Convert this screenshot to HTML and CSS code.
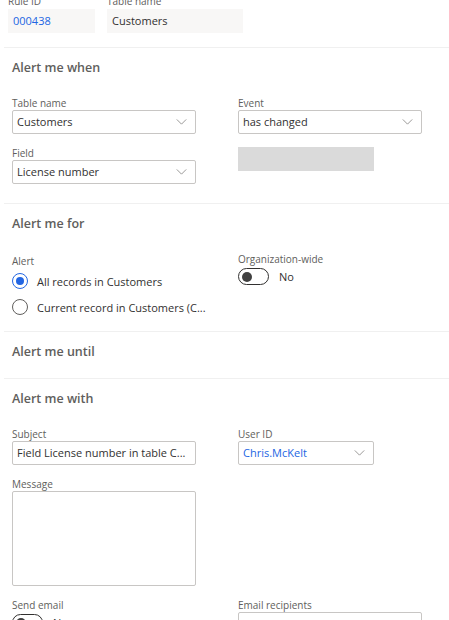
FILE: index.html
```html
<!DOCTYPE html>
<html>
<head>
<meta charset="utf-8">
<link rel="stylesheet" href="styles.css">
</head>
<body>
<div class="page">
  <div class="top">
    <div class="field">
      <div class="label">Rule ID</div>
      <div class="ro ro-id link">000438</div>
    </div>
    <div class="field">
      <div class="label">Table name</div>
      <div class="ro ro-table">Customers</div>
    </div>
  </div>

  <section class="section s-when">
    <h2 class="heading">Alert me when</h2>
    <div class="grid">
      <div class="field">
        <div class="label">Table name</div>
        <div class="input select"><span>Customers</span><svg class="chev" viewBox="0 0 12 7"><path d="M0.5 0.5 L6 6 L11.5 0.5"/></svg></div>
      </div>
      <div class="field">
        <div class="label">Event</div>
        <div class="input select"><span>has changed</span><svg class="chev" viewBox="0 0 12 7"><path d="M0.5 0.5 L6 6 L11.5 0.5"/></svg></div>
      </div>
      <div class="field">
        <div class="label">Field</div>
        <div class="input select"><span>License number</span><svg class="chev" viewBox="0 0 12 7"><path d="M0.5 0.5 L6 6 L11.5 0.5"/></svg></div>
      </div>
      <div class="field">
        <div class="disabled-box"></div>
      </div>
    </div>
  </section>

  <section class="section s-for">
    <h2 class="heading">Alert me for</h2>
    <div class="grid">
      <div class="field">
        <div class="label">Alert</div>
        <div class="radio-row"><span class="radio on"></span><span>All records in Customers</span></div>
        <div class="radio-row"><span class="radio"></span><span>Current record in Customers (C...</span></div>
      </div>
      <div class="field org">
        <div class="label">Organization-wide</div>
        <div class="toggle-row"><span class="toggle"><span class="knob"></span></span><span>No</span></div>
      </div>
    </div>
  </section>

  <section class="section s-until">
    <h2 class="heading">Alert me until</h2>
  </section>

  <section class="section s-with">
    <h2 class="heading">Alert me with</h2>
    <div class="grid">
      <div class="field">
        <div class="label">Subject</div>
        <div class="input"><span>Field License number in table C...</span></div>
      </div>
      <div class="field">
        <div class="label">User ID</div>
        <div class="input select short"><span class="link">Chris.McKelt</span><svg class="chev" viewBox="0 0 12 7"><path d="M0.5 0.5 L6 6 L11.5 0.5"/></svg></div>
      </div>
      <div class="field">
        <div class="label">Message</div>
        <div class="textarea"></div>
      </div>
      <div class="field"></div>
      <div class="field">
        <div class="label">Send email</div>
        <div class="toggle-row"><span class="toggle"><span class="knob"></span></span><span>No</span></div>
      </div>
      <div class="field">
        <div class="label">Email recipients</div>
        <div class="input"></div>
      </div>
    </div>
  </section>
</div>
</body>
</html>
```

FILE: styles.css
```css
* { box-sizing: border-box; }
html, body {
  margin: 0;
  padding: 0;
  background: #ffffff;
  overflow: hidden;
}
body {
  font-family: "Segoe UI", "Open Sans", "Noto Sans", sans-serif;
  color: #323130;
  width: 449px;
  height: 620px;
}
.page {
  margin-top: -6px;
}
.top {
  display: flex;
  gap: 12px;
  padding: 0 0 14px 8px;
}
.top .label { margin-bottom: 1px; }
.label {
  font-size: 10px;
  line-height: 14px;
  height: 14px;
  color: #605e5c;
  white-space: nowrap;
}
.ro {
  height: 24px;
  background: #f8f7f6;
  font-size: 11px;
  line-height: 24px;
  padding-left: 5px;
}
.ro-id { width: 87px; }
.ro-table { width: 136px; }
.link { color: #2266e3; }

.section {
  border-top: 1px solid #f0f0f0;
  margin-left: 4px;
  padding: 10px 0 19px 8px;
}
.heading {
  margin: 0;
  font-size: 12.5px;
  line-height: 20px;
  font-weight: 600;
  color: #605e5c;
}
.grid {
  display: grid;
  grid-template-columns: 184px 184px;
  column-gap: 42px;
  row-gap: 12px;
  margin-top: 18px;
}
.input {
  height: 24px;
  border: 1px solid #c8c6c4;
  border-radius: 2px;
  font-size: 11px;
  line-height: 22px;
  padding: 0 8px 0 4px;
  display: flex;
  align-items: center;
  justify-content: space-between;
  white-space: nowrap;
  overflow: hidden;
  background: #fff;
}
.input.short { width: 136px; }
.chev {
  width: 11px;
  height: 6px;
  flex: none;
}
.chev path {
  fill: none;
  stroke: #8a8886;
  stroke-width: 1;
}
.disabled-box {
  width: 136px;
  height: 24px;
  background: #dadada;
  margin-top: 1px;
}

.s-for { padding-bottom: 11px; }
.s-for .grid { margin-top: 20px; }
.radio-row {
  display: flex;
  align-items: center;
  gap: 9px;
  height: 26px;
  font-size: 11px;
  white-space: nowrap;
}
.radio-row:first-of-type { margin-top: 3px; }
.radio {
  width: 16px;
  height: 16px;
  border-radius: 50%;
  border: 1px solid #605e5c;
  flex: none;
  display: flex;
  align-items: center;
  justify-content: center;
}
.radio.on { border-color: #2266e3; }
.radio.on::after {
  content: "";
  width: 8px;
  height: 8px;
  border-radius: 50%;
  background: #2266e3;
}
.org { margin-top: -2px; }
.toggle-row {
  display: flex;
  align-items: center;
  gap: 10px;
  font-size: 11px;
  margin-top: 2px;
}
.toggle {
  width: 31px;
  height: 17px;
  border: 1px solid #323130;
  border-radius: 9px;
  display: flex;
  align-items: center;
  padding-left: 3px;
}
.knob {
  width: 10px;
  height: 10px;
  border-radius: 50%;
  background: #404040;
}

.s-until { padding-bottom: 16px; }
.textarea {
  height: 95px;
  border: 1px solid #c8c6c4;
  border-radius: 2px;
}
```
